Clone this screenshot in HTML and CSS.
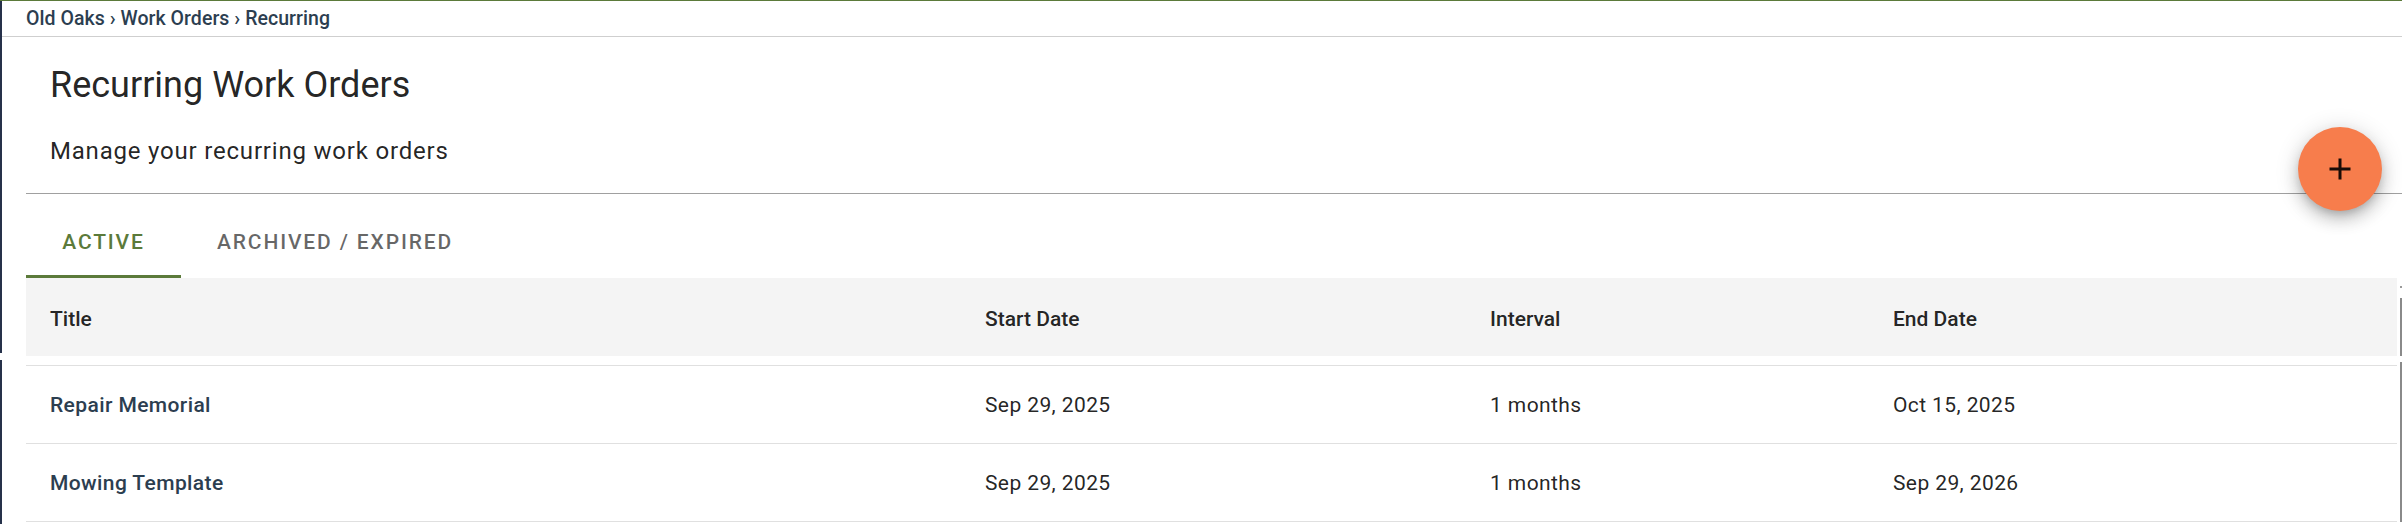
FILE: index.html
```html
<!DOCTYPE html>
<html lang="en">
<head>
<meta charset="utf-8">
<title>Recurring Work Orders</title>
<link rel="stylesheet" href="styles.css">
</head>
<body>
<div class="app">
  <nav class="crumbs">Old Oaks › Work Orders › Recurring</nav>
  <header class="page-head">
    <h1 class="page-title">Recurring Work Orders</h1>
    <p class="page-sub">Manage your recurring work orders</p>
    <button class="fab" aria-label="Add">
      <svg viewBox="0 0 24 24" width="36" height="36"><path d="M19 13h-6v6h-2v-6H5v-2h6V5h2v6h6v2z"/></svg>
    </button>
  </header>
  <div class="tabs">
    <div class="tab tab-active">Active</div>
    <div class="tab">Archived / Expired</div>
  </div>
  <div class="table-wrap">
    <div class="table">
      <div class="row thead">
        <div class="cell">Title</div>
        <div class="cell">Start Date</div>
        <div class="cell">Interval</div>
        <div class="cell">End Date</div>
      </div>
      <div class="tbody">
        <div class="row">
          <div class="cell cell-title">Repair Memorial</div>
          <div class="cell">Sep 29, 2025</div>
          <div class="cell">1 months</div>
          <div class="cell">Oct 15, 2025</div>
        </div>
        <div class="row">
          <div class="cell cell-title">Mowing Template</div>
          <div class="cell">Sep 29, 2025</div>
          <div class="cell">1 months</div>
          <div class="cell">Sep 29, 2026</div>
        </div>
      </div>
    </div>
    <div class="scroll">
      <span class="scroll-tick"></span>
      <span class="scroll-thumb"></span>
      <span class="scroll-rest"></span>
    </div>
  </div>
</div>
</body>
</html>
```
FILE: styles.css
```css
html, body {
  margin: 0;
  padding: 0;
}
body {
  font-family: Roboto, "Liberation Sans", sans-serif;
  background-color: #fff;
  background-image: linear-gradient(to bottom, #26314a 0, #26314a 353px, #fff 353px, #fff 360px, #26314a 360px);
  background-repeat: no-repeat;
  background-size: 2px 100%;
  min-height: 100vh;
  border-top: 1px solid #5b7a3a;
  box-sizing: border-box;
}
.app {
  margin-left: 2px;
}
.crumbs {
  height: 35px;
  line-height: 35px;
  padding-left: 24px;
  font-size: 19.5px;
  font-weight: 500;
  letter-spacing: 0.05px;
  color: #2c3e50;
  border-bottom: 1px solid #cfcfcf;
}
.page-head {
  position: relative;
  margin-left: 24px;
  padding: 27px 24px 28px;
  border-bottom: 1px solid #a0a0a0;
}
.page-title {
  margin: 0 0 31px;
  font-size: 36px;
  line-height: 42px;
  font-weight: 400;
  color: rgba(0, 0, 0, 0.87);
}
.page-sub {
  margin: 0;
  font-size: 24px;
  line-height: 28px;
  letter-spacing: 0.8px;
  color: rgba(0, 0, 0, 0.87);
}
.fab {
  position: absolute;
  top: 90px;
  right: 20px;
  width: 84px;
  height: 84px;
  border: 0;
  border-radius: 50%;
  background: #f77d4c;
  display: flex;
  align-items: center;
  justify-content: center;
  padding: 0;
  box-shadow: 0 5px 8px -3px rgba(0,0,0,0.2), 0 9px 15px 1px rgba(0,0,0,0.14), 0 3px 22px 3px rgba(0,0,0,0.12);
}
.fab svg {
  fill: rgba(0, 0, 0, 0.9);
}
.tabs {
  display: flex;
  margin: 12px 0 0 24px;
  height: 72px;
}
.tab {
  box-sizing: border-box;
  height: 72px;
  padding: 0 36px;
  display: flex;
  align-items: center;
  justify-content: center;
  font-size: 21px;
  font-weight: 500;
  letter-spacing: 1.85px;
  text-transform: uppercase;
  color: rgba(0, 0, 0, 0.6);
  border-bottom: 3px solid transparent;
  padding-top: 3px;
}
.tab-active {
  color: #5b7a3a;
  border-bottom-color: #5b7a3a;
  width: 155px;
}
.table-wrap {
  display: flex;
  margin-left: 24px;
}
.table {
  flex: 1;
}
.row {
  display: grid;
  grid-template-columns: 935px 505px 403px 1fr;
  align-items: center;
  height: 77px;
  border-bottom: 1px solid #e0e0e0;
  font-size: 21px;
  letter-spacing: 0.4px;
  color: rgba(0, 0, 0, 0.87);
}
.thead {
  height: 78px;
  border-bottom: 0;
  background: #f4f4f4;
  font-weight: 500;
  letter-spacing: 0;
  margin-bottom: 9px;
  padding-top: 3px;
  box-sizing: border-box;
}
.tbody {
  border-top: 1px solid #e0e0e0;
}
.cell {
  padding-left: 24px;
}
.cell-title {
  font-weight: 500;
  color: #2c3e50;
}
.scroll {
  width: 2px;
  margin-left: 3px;
  display: flex;
  flex-direction: column;
}
.scroll-tick {
  display: block;
  height: 2px;
  margin-top: 8px;
  background: #9a9a9a;
}
.scroll-thumb {
  display: block;
  height: 58px;
  margin-top: 10px;
  background: #8a8a8a;
}
.scroll-rest {
  display: block;
  flex: 1;
  margin-top: 6px;
  background: #8a8a8a;
}
```
